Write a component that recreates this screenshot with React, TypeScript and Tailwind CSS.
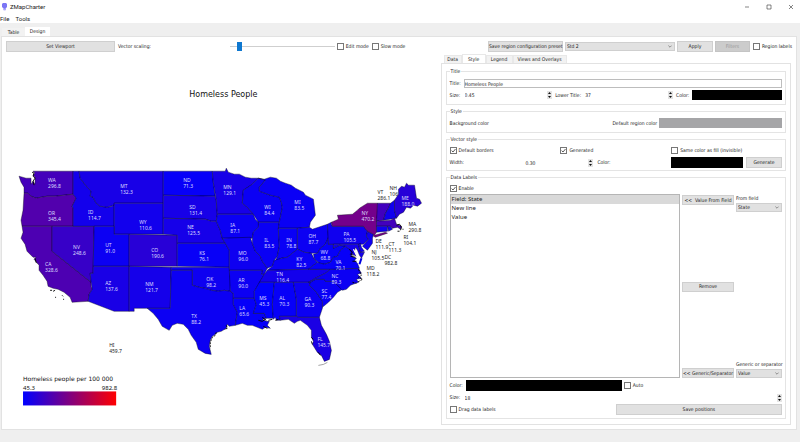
import { useId, type ReactNode } from "react";

const UI_FONT = "font-['DejaVu_Sans_Condensed','DejaVu_Sans',sans-serif]";
const BUTTON = "border border-[#cfcfcf] bg-[#e1e1e1] text-center whitespace-nowrap";

type Region = { id: string; value: number; x: number; y: number; d?: string; outside?: boolean; text?: string };

const LOW = 45.3;
const HIGH = 982.8;

function regionColor(value: number) {
  const t = (value - LOW) / (HIGH - LOW);
  return `rgb(${Math.round(255 * t)}, 0, ${Math.round(255 * (1 - t))})`;
}

const REGIONS: Region[] = [
  { id: "WA", value: 296.8, x: 48, y: 182, d: "M33 171 L73 171 L73 194 L64 195 L55 196 L47 196 L36 198 L31 196 L28 193 L24 193 L24 187 L21 182 L19 176 L26 178 L31 178 L31 184 L33 181 L35 184 L35 177 L33 175 L35 173Z" },
  { id: "OR", value: 345.4, x: 48, y: 215, d: "M24 193 L28 193 L31 196 L36 198 L47 196 L55 196 L64 195 L73 194 L76 198 L72 206 L73 208 L73 226 L22 226 L21 220 L23 210Z" },
  { id: "CA", value: 328.6, x: 45, y: 266, d: "M22 226 L52 226 L52 251 L91 282 L91 286 L92 289 L89 294 L88 301 L72 302 L70 297 L64 292 L58 289 L53 288 L48 286 L47 281 L43 275 L39 270 L39 265 L34 259 L36 257 L33 257 L27 251 L25 244 L21 238 L23 232Z" },
  { id: "NV", value: 248.6, x: 73, y: 249, d: "M52 226 L94 226 L93 273 L90 273 L91 282 L52 251Z" },
  { id: "ID", value: 114.7, x: 88, y: 214, d: "M73 171 L79 171 L80 178 L87 187 L91 191 L90 196 L93 197 L96 203 L100 206 L107 207 L112 206 L114 204 L114 226 L73 226 L73 208 L72 206 L76 198 L73 194Z" },
  { id: "MT", value: 132.3, x: 120, y: 188, d: "M79 171 L163 171 L163 203 L114 203 L114 205 L107 207 L100 206 L96 203 L93 197 L90 196 L91 191 L87 187 L80 178Z" },
  { id: "WY", value: 110.6, x: 139, y: 224, d: "M114 203 H163 V234 H114Z" },
  { id: "UT", value: 91.0, x: 105, y: 247, d: "M94 226 H114 V234 H129 V266 H93Z" },
  { id: "CO", value: 190.6, x: 151, y: 252, d: "M129 234 L177 235 L177 266 L129 266Z" },
  { id: "AZ", value: 137.6, x: 105, y: 285, d: "M93 266 H129 V311 H114 L88 301 L89 294 L92 289 L91 282 L90 273 L93 273Z" },
  { id: "NM", value: 121.7, x: 145, y: 286, d: "M129 266 L171 267 L170 308 L134 308 V311 H129Z" },
  { id: "ND", value: 71.3, x: 183, y: 182, d: "M163 171 H212 L213 182 L215 196 L163 195Z" },
  { id: "SD", value: 131.4, x: 189, y: 209, d: "M163 195 L215 196 L216 200 L217 214 L216 221 L211 221 L205 219 L163 218Z" },
  { id: "NE", value: 125.5, x: 187, y: 229, d: "M163 218 L205 219 L211 221 L216 221 L220 230 L222 238 L225 243 L177 243 V235 L163 234Z" },
  { id: "KS", value: 76.1, x: 199, y: 255, d: "M177 243 H225 L229 250 V267 L177 266Z" },
  { id: "OK", value: 98.2, x: 206, y: 281, d: "M171 267 L229 267 L230 280 L230 291 L224 290 L218 291 L211 290 L205 288 L199 287 L192 285 L192 270 L171 270Z" },
  { id: "TX", value: 88.2, x: 191, y: 318, d: "M171 270 L192 270 L192 285 L199 287 L205 288 L211 290 L218 291 L224 290 L230 291 L233 293 L233 304 L237 312 L235 325 L229 326 L227 324 L226 328 L221 331 L217 332 L215 334 L212 336 L210 340 L209 346 L211 354 L205 353 L198 349 L196 342 L191 335 L188 329 L183 324 L177 323 L172 325 L169 330 L162 326 L158 319 L153 313 L147 308 L170 308Z" },
  { id: "MN", value: 129.1, x: 223, y: 189, d: "M212 171 H225 L226 168 L228 172 L234 174 L239 174 L245 177 L251 178 L258 178 L252 184 L248 187 L243 190 L242 203 L247 207 L253 214 L217 214 L216 200 L213 182Z" },
  { id: "IA", value: 87.1, x: 230, y: 227, d: "M217 214 H253 L255 219 L259 223 L258 227 L253 232 L252 238 L222 238 L220 230 L216 221Z" },
  { id: "MO", value: 96.0, x: 238, y: 255, d: "M222 238 L250 237 L252 243 L255 251 L260 256 L262 261 L267 268 L264 274 L261 274 L262 270 L229 270 L229 250 L225 243Z" },
  { id: "AR", value: 90.0, x: 238, y: 282, d: "M229 270 H262 L261 274 L264 274 L259 283 L254 291 L254 298 H233 V293 L230 291Z" },
  { id: "LA", value: 65.6, x: 239, y: 310, d: "M233 298 H254 L256 304 L253 313 H264 L266 318 L262 319 L266 321 L269 321 L267 325 L270 328 L265 327 L262 329 L257 327 L252 325 L247 325 L242 323 L235 325 L237 312 L233 304Z" },
  { id: "WI", value: 84.4, x: 264, y: 209, d: "M258 178 L265 180 L259 187 L259 191 L270 195 L279 197 L281 202 L282 207 L279 222 H258 L253 214 L247 207 L242 203 L243 190 L252 184Z" },
  { id: "IL", value: 83.5, x: 264, y: 242, d: "M258 222 H279 L278 229 L279 246 L277 256 L274 260 L272 266 L267 268 L262 261 L260 256 L255 251 L252 243 L252 238 L253 232 L258 227Z" },
  { id: "MI", value: 83.5, x: 294, y: 204, d: "M258 178 L264 179 L270 177 L276 178 L280 181 L285 183 L291 185 L295 188 L303 192 L305 195 L313 199 L315 215 L310 222 L309 227 L297 228 H278 L279 222 L282 207 L281 202 L279 197 L270 195 L259 191 L259 187 L265 180Z" },
  { id: "IN", value: 78.8, x: 286, y: 242, d: "M278 228 H297 V249 L292 253 L287 257 L281 258 L275 261 L277 256 L279 246Z" },
  { id: "OH", value: 87.7, x: 308, y: 238, d: "M297 228 L309 227 L312 229 L318 227 L327 224 L328 237 L325 244 L320 248 L317 253 L311 253 L304 252 L297 249Z" },
  { id: "KY", value: 82.5, x: 296, y: 261, d: "M297 249 L304 252 L311 253 L314 259 L317 262 L308 269 L267 270 L272 266 L274 260 L281 258 L287 257 L292 253Z" },
  { id: "TN", value: 116.4, x: 276, y: 276, d: "M267 270 L308 269 L330 269 L325 273 L315 278 L308 282 H259 L264 274Z" },
  { id: "MS", value: 45.3, x: 259, y: 300, d: "M259 282 H274 L272 304 L273 318 L266 318 L264 313 H253 L256 304 L254 298 V291Z" },
  { id: "AL", value: 70.3, x: 279, y: 300, d: "M274 282 H293 L296 299 L296 316 H279 L280 320 L276 320 L275 317 L273 319 L272 304Z" },
  { id: "GA", value: 90.3, x: 304, y: 301, d: "M293 282 H310 L309 285 L316 292 L322 301 L322 308 L319 317 L298 317 L296 316 V299Z" },
  { id: "FL", value: 145.7, x: 317, y: 341, d: "M279 316 H296 L298 317 L319 317 L321 325 L326 334 L329 341 L331 350 L329 359 L324 361 L321 355 L317 352 L312 344 L313 341 L311 337 L311 330 L307 325 L300 320 L297 321 L294 323 L288 319 L280 320Z" },
  { id: "SC", value: 77.4, x: 321, y: 293, d: "M310 282 L315 279 L324 279 L325 281 L333 281 L342 289 L337 292 L333 297 L328 302 L322 307 L322 301 L316 292 L309 285Z" },
  { id: "NC", value: 89.3, x: 331, y: 278, d: "M330 269 L358 268 L361 273 L357 274 L361 278 L356 279 L358 282 L350 285 L346 289 L342 290 L333 281 L325 281 L324 279 L315 279 L310 282 L308 282 L315 278 L325 273Z" },
  { id: "WV", value: 68.8, x: 320, y: 254, d: "M328 237 V244 H333 V248 L339 245 L345 246 L340 250 L337 256 L333 257 L330 262 L324 264 L319 263 L314 259 L313 254 L317 253 L320 248 L325 244Z" },
  { id: "VA", value: 70.1, x: 335, y: 264, d: "M308 269 L317 262 L324 264 L330 262 L333 257 L337 256 L340 250 L345 246 L349 249 L352 252 L351 256 L356 258 L354 260 L357 263 L359 268 L330 269Z" },
  { id: "PA", value: 105.5, x: 343, y: 236, d: "M327 224 L331 222 V224 L332 226 H363 L367 231 L366 236 L368 239 L363 244 H328Z" },
  { id: "MD", value: 118.2, x: 366, y: 270, outside: true, d: "M333 244 H358 L360 252 H364 L361 258 L359 255 L357 250 L355 247 L354 251 L356 256 L352 254 L349 249 L345 246 L339 245 L333 248Z" },
  { id: "DE", value: 111.9, x: 375, y: 243, outside: true, d: "M358 244 L360 243 L361 247 L364 251 L360 252Z" },
  { id: "NJ", value: 105.5, x: 371, y: 254, outside: true, d: "M367 231 L373 234 L372 238 L372 243 L367 250 L362 246 L368 239 L366 236Z" },
  { id: "NY", value: 470.2, x: 361, y: 215, d: "M332 226 L331 222 L338 219 L337 215 L352 214 L357 210 L359 208 L367 203 L377 203 L377 214 L376 221 L376 232 L374 235 L385 232 L387 233 L375 237 L373 236 L373 234 L367 231 L363 226Z" },
  { id: "VT", value: 286.1, x: 377, y: 194, outside: true, d: "M377 203 H390 L388 208 L385 213 L383 220 L376 221Z" },
  { id: "NH", value: 106.1, text: "106", x: 389, y: 190, outside: true, d: "M390 203 L394 200 L394 210 L396 218 L383 220 L385 213 L388 208Z" },
  { id: "ME", value: 188.0, x: 401, y: 200, d: "M394 200 L398 194 L398 189 L401 186 L404 187 L406 183 L408 185 L414 185 L416 198 L419 199 L421 203 L417 206 L413 205 L410 208 L406 207 L403 212 L399 214 L396 218 L394 210Z" },
  { id: "MA", value: 290.8, x: 408, y: 226, outside: true, d: "M376 221 L390 220 L394 218 L396 224 L401 226 L400 229 L397 227 L392 228 L390 226 H376Z" },
  { id: "CT", value: 111.3, x: 388, y: 246, outside: true, d: "M376 226 H387 V231 L376 232Z" },
  { id: "RI", value: 104.1, x: 403, y: 239, outside: true, d: "M387 226 H390 L392 229 L388 231Z" },
  { id: "DC", value: 982.8, x: 384, y: 259, outside: true },
  { id: "HI", value: 459.7, x: 109, y: 347, outside: true },
];

function MapCanvas() {
  return (
    <svg
      viewBox="2 52 436 372"
      className="block w-full"
      role="img"
      aria-label="Homeless people per 100 000 by state"
      fontFamily="'Noto Sans', sans-serif"
    >
      <defs>
        <linearGradient id="scale">
          <stop offset="0" stopColor="#0000ff" />
          <stop offset="1" stopColor="#ff0000" />
        </linearGradient>
      </defs>
      <text x="189" y="97" fontSize="8" fill="#111" fontFamily="'DejaVu Sans', sans-serif">Homeless People</text>
      <g stroke="#000010" strokeOpacity="0.75" strokeWidth="0.5" strokeLinejoin="round">
        {REGIONS.filter((r) => r.d).map((r) => (
          <path key={r.id} d={r.d} fill={regionColor(r.value)} />
        ))}
      </g>
      {/* Islands, sounds and broken coast */}
      <g fill="none" stroke="#000" strokeWidth="0.9">
        <path d="M32 172 l2 1 l-1 3 l2 2 l-2 3 l1 4" />
        <path d="M50 290 h2 M53 291 l2 -1 M55 297 h1 M62 295 l1 1 M63 299 h1" />
        <path d="M35 258 l1 4 l1 1" />
        <path d="M226 325 l1 3 l-3 1 M216 332 l-1 3 l-3 2 l-2 5 l0 6" strokeDasharray="2 1" />
        <path d="M258 320 l4 1 l3 -2 M263 326 l4 2 M262 317 l4 3 M268 320 l4 -1 M275 320 l3 -1" />
        <path d="M349 249 l3 3 l-2 2 l3 1 M350 256 l5 1 M352 261 l4 0" />
        <path d="M358 269 l3 6 l-3 2 l4 2 l-5 3 M352 282 l4 1" strokeDasharray="2 1" />
        <path d="M396 225 l3 -1 l2 3 l-1 3 M397 231 h2 M402 229 h1" />
        <path d="M311 337 l2 2 M311 341 l1 3 M318 352 l2 3" />
      </g>
      <path d="M318 365 l5 -1 l4 -2" fill="none" stroke="#666" strokeWidth="0.6" />
      <path d="M353 249 l2 4 l2 4 l1 6" fill="none" stroke="#fff" strokeWidth="1.2" />
      <path d="M361 258 l-2 6" fill="none" stroke="#0000e0" strokeWidth="2" />
      <g fontSize="5">
        {REGIONS.map((r) => (
          <text key={r.id} fill={r.outside ? "#222" : "#dcdcff"}>
            <tspan x={r.x} y={r.y}>{r.id}</tspan>
            <tspan x={r.x} y={r.y + 6}>{r.text ?? r.value.toFixed(1)}</tspan>
          </text>
        ))}
      </g>
      <text x="23" y="381" fontSize="6" fill="#111" fontFamily="'DejaVu Sans', sans-serif">Homeless people per 100 000</text>
      <text x="23" y="390" fontSize="6" fill="#111">45.3</text>
      <text x="117" y="390" fontSize="6" fill="#111" textAnchor="end">982.8</text>
      <rect x="23" y="391" width="93" height="14" fill="url(#scale)" />
    </svg>
  );
}

function Check({ label, checked = false }: { label: string; checked?: boolean }) {
  return (
    <label className="flex items-center gap-0.5 whitespace-nowrap">
      <span className="relative block size-[7px] shrink-0">
        <input type="checkbox" defaultChecked={checked} className="peer block size-[7px] appearance-none border border-[#777] bg-white" />
        <svg viewBox="0 0 7 7" className="pointer-events-none absolute inset-0 hidden size-[7px] peer-checked:block">
          <path d="M1.6 3.6 L3 5 L5.5 2" fill="none" stroke="#333" strokeWidth="0.8" />
        </svg>
      </span>
      {label}
    </label>
  );
}

function Select({ label, value, options, className = "" }: { label: string; value: string; options: string[]; className?: string }) {
  return (
    <span className={`relative block ${className}`}>
      <select aria-label={label} defaultValue={value} className="block h-full w-full appearance-none border border-[#cfcfcf] bg-[#e1e1e1] px-px">
        {options.map((o) => (
          <option key={o}>{o}</option>
        ))}
      </select>
      <svg viewBox="0 0 4 3" className="pointer-events-none absolute inset-y-0 right-[3px] my-auto h-[3px] w-1">
        <path d="M0.4 0.6 L2 2.2 L3.6 0.6" fill="none" stroke="#555" strokeWidth="0.6" />
      </svg>
    </span>
  );
}

function Spin({ id, value, className = "" }: { id: string; value: string; className?: string }) {
  return (
    <span className={`flex items-center ${className}`}>
      <input id={id} defaultValue={value} inputMode="decimal" className="h-2 w-full min-w-0 flex-1 bg-transparent px-px" />
      <span className="flex w-[5px] shrink-0 flex-col bg-[#e4e4e4]">
        <button type="button" aria-label="Increase" className="h-[4px]">
          <svg viewBox="0 0 5 4" className="block h-[4px] w-[5px]"><path d="M1 3 L2.5 1 L4 3Z" fill="#111" /></svg>
        </button>
        <button type="button" aria-label="Decrease" className="h-[4px]">
          <svg viewBox="0 0 5 4" className="block h-[4px] w-[5px]"><path d="M1 1 L2.5 3 L4 1Z" fill="#111" /></svg>
        </button>
      </span>
    </span>
  );
}

function Group({ title, className = "", children }: { title: string; className?: string; children: ReactNode }) {
  return (
    <fieldset className={`min-w-0 border border-[#e4e4e4] px-[3px] ${className}`}>
      <legend className="h-[6px] px-px leading-[6px]">{title}</legend>
      {children}
    </fieldset>
  );
}

function Swatch({ label, className }: { label: string; className: string }) {
  return <button type="button" aria-label={label} className={className} />;
}

function StylePanel() {
  const id = useId();
  return (
    <div className="flex flex-1 flex-col gap-[3px] border border-[#e2e2e2] bg-white px-1 pt-1 pb-[5px]">
      <Group title="Title" className="pt-[5px] pb-1">
        <div className="flex flex-col gap-0.5">
          <div className="flex h-[9px] items-center">
            <label htmlFor={`${id}title`} className="w-[14px]">Title:</label>
            <input id={`${id}title`} defaultValue="Homeless People" className="h-[9px] min-w-0 flex-1 border border-[#bdbdbd] bg-white" />
          </div>
          <div className="flex h-[10px] items-center gap-[3px]">
            <div className="flex flex-1 items-center">
              <label htmlFor={`${id}size`} className="w-[14px]">Size:</label>
              <Spin id={`${id}size`} value="0.45" className="flex-1" />
            </div>
            <div className="flex flex-[1.15] items-center gap-[3px]">
              <label htmlFor={`${id}lower`} className="whitespace-nowrap">Lower Title:</label>
              <Spin id={`${id}lower`} value="37" className="flex-1" />
            </div>
            <span>Color:</span>
            <Swatch label="Title color" className="h-[10px] w-[27%] bg-black" />
          </div>
        </div>
      </Group>

      <Group title="Style" className="py-1">
        <div className="flex h-[10px] items-center gap-0.5">
          <span className="flex-1">Background color</span>
          <span>Default region color</span>
          <Swatch label="Default region color" className="h-[10px] w-[37%] bg-[#a5a5a7]" />
        </div>
      </Group>

      <Group title="Vector style" className="pt-[5px] pb-0.5">
        <div className="grid grid-cols-3">
          <Check label="Default borders" checked />
          <Check label="Generated" checked />
          <Check label="Same color as fill (invisible)" />
        </div>
        <div className="mt-[3px] grid h-[11px] grid-cols-3 items-center">
          <label htmlFor={`${id}width`}>Width:</label>
          <div className="-ml-9 flex items-center gap-1">
            <Spin id={`${id}width`} value="0.30" className="w-[69px]" />
            <span>Color:</span>
          </div>
          <div className="flex gap-[3px]">
            <Swatch label="Border color" className="h-[11px] flex-1 bg-black" />
            <button type="button" className={`${BUTTON} w-9`}>Generate</button>
          </div>
        </div>
      </Group>

      <Group title="Data Labels" className="flex flex-1 flex-col pt-[5px] pb-[3px]">
        <div className="flex h-full flex-col">
          <Check label="Enable" checked />
          <div className="mt-0.5 flex min-h-[184px] flex-1 gap-0.5">
            <ul className="flex-1 border border-[#b5b5b5] font-['Noto_Sans',sans-serif] text-[6px] leading-[9px]">
              <li className="bg-[#d9d9d9] px-px">Field: State</li>
              <li className="px-px">New line</li>
              <li className="px-px">Value</li>
            </ul>
            <div className="flex w-[52px] flex-col justify-between pt-px">
              <button type="button" className={`${BUTTON} h-[10px]`}>&lt;&lt;&nbsp; Value From Field</button>
              <button type="button" className={`${BUTTON} h-[10px]`}>Remove</button>
              <button type="button" className={`${BUTTON} h-[10px]`}>&lt;&lt; Generic/Separator</button>
            </div>
            <div className="flex w-[46px] flex-col justify-between">
              <div>
                <div className="h-[9px] pt-px whitespace-nowrap">From field</div>
                <Select label="From field" value="State" options={["State", "Value"]} className="h-[9px]" />
              </div>
              <div>
                <div className="h-[9px] pt-px whitespace-nowrap">Generic or separator</div>
                <Select label="Generic or separator" value="Value" options={["Value", "New line"]} className="h-[9px]" />
              </div>
            </div>
          </div>
          <div className="mt-0.5 flex h-[11px] items-center gap-0.5">
            <span className="w-[14px]">Color:</span>
            <Swatch label="Label color" className="h-[11px] w-[47%] bg-black" />
            <Check label="Auto" />
          </div>
          <div className="mt-[3px] flex h-[7px] items-center">
            <label htmlFor={`${id}lsize`} className="w-[14px]">Size:</label>
            <Spin id={`${id}lsize`} value="18" className="flex-1" />
          </div>
          <div className="mt-[3px] flex h-[11px] items-center justify-between">
            <Check label="Drag data labels" />
            <button type="button" className={`${BUTTON} h-[11px] w-1/2`}>Save positions</button>
          </div>
        </div>
      </Group>
    </div>
  );
}

export default function App() {
  return (
    <div className={`flex min-h-screen flex-col bg-[#efefef] text-[5px] leading-[7px] text-[#222] ${UI_FONT}`}>
      <header className="bg-white font-['Roboto',sans-serif] text-[6px]">
        <div className="flex h-[13px] items-center gap-[3px] pl-0.5">
          <svg viewBox="0 0 5 8" className="h-2 w-[5px]">
            <path d="M0 1 L1 0 H4 L5 1 V4 L3.6 5.4 V7 H1.6 V5.4 L0 4Z" fill="#7b76f5" />
            <path d="M1.6 5.6 H3.6 V7.4 H1.6Z" fill="#aaa5fa" />
          </svg>
          <h1>ZMapCharter</h1>
          <div className="ml-auto flex items-center gap-4 pr-[6px]">
            <button type="button" aria-label="Minimize">
              <svg viewBox="0 0 6 6" className="block size-[6px]"><path d="M1 3 H5" stroke="#333" strokeWidth="0.6" /></svg>
            </button>
            <button type="button" aria-label="Maximize">
              <svg viewBox="0 0 6 6" className="block size-[6px]"><path d="M1 1 H5 V5 H1Z" fill="none" stroke="#333" strokeWidth="0.6" /></svg>
            </button>
            <button type="button" aria-label="Close">
              <svg viewBox="0 0 6 6" className="block size-[6px]"><path d="M1 1 L5 5 M5 1 L1 5" stroke="#333" strokeWidth="0.6" /></svg>
            </button>
          </div>
        </div>
        <nav className="flex h-[10px] items-center gap-[6px]">
          <button type="button">File</button>
          <button type="button">Tools</button>
        </nav>
      </header>

      <div role="tablist" className="flex h-[13px] items-end pl-0.5">
        <button type="button" role="tab" className="h-2 w-[23px] bg-[#f2f2f2]">Table</button>
        <button type="button" role="tab" aria-selected="true" className="h-[9px] w-[25px] bg-white">Design</button>
      </div>

      <main className="mr-[3px] mb-3 ml-[1px] flex flex-1 flex-col border border-[#e2e2e2] bg-white pt-1">
        <div className="flex h-[11px] items-center gap-0.5 px-1">
          <button type="button" className={`${BUTTON} h-[11px] w-[109px]`}>Set Viewport</button>
          <label htmlFor="scaling" className="ml-px w-[110px]">Vector scaling:</label>
          <input
            id="scaling"
            type="range"
            defaultValue={7}
            className="h-[9px] min-w-[60px] flex-[4] appearance-none bg-transparent [&::-webkit-slider-runnable-track]:h-px [&::-webkit-slider-runnable-track]:bg-[#cfcfcf] [&::-webkit-slider-thumb]:-mt-1 [&::-webkit-slider-thumb]:h-[9px] [&::-webkit-slider-thumb]:w-[5px] [&::-webkit-slider-thumb]:appearance-none [&::-webkit-slider-thumb]:bg-[#0f78d0]"
          />
          <Check label="Edit mode" />
          <span className="ml-px"><Check label="Slow mode" /></span>
          <span className="flex-[3]" />
          <button type="button" className={`${BUTTON} h-[11px] w-[75px]`}>Save region configuration preset</button>
          <Select label="Region configuration preset" value="Std 2" options={["Std 1", "Std 2"]} className="h-[9px] w-[110px]" />
          <button type="button" className={`${BUTTON} h-[11px] w-9`}>Apply</button>
          <button type="button" disabled className="h-[11px] w-[35px] border border-[#c4c4c4] bg-[#cccccc] text-[#999]">Filters</button>
          <span className="ml-px"><Check label="Region labels" /></span>
        </div>

        <div className="flex flex-1">
          <section className="min-w-0 flex-[436]">
            <MapCanvas />
          </section>
          <section className="mt-0.5 mr-[5px] mb-1 ml-0.5 flex min-w-0 flex-[350] flex-col">
            <div role="tablist" className="flex h-[9px] items-end pl-[3px]">
              <button type="button" role="tab" className="h-2 w-[18px] border border-b-0 border-[#e8e8e8] bg-[#f2f2f2]">Data</button>
              <button type="button" role="tab" aria-selected="true" className="h-[9px] w-[24px] border border-b-0 border-[#e8e8e8] bg-white">Style</button>
              <button type="button" role="tab" className="h-2 w-[27px] border border-b-0 border-[#e8e8e8] bg-[#f2f2f2]">Legend</button>
              <button type="button" role="tab" className="h-2 w-[54px] border border-b-0 border-[#e8e8e8] bg-[#f2f2f2]">Views and Overlays</button>
            </div>
            <StylePanel />
          </section>
        </div>
      </main>
    </div>
  );
}
